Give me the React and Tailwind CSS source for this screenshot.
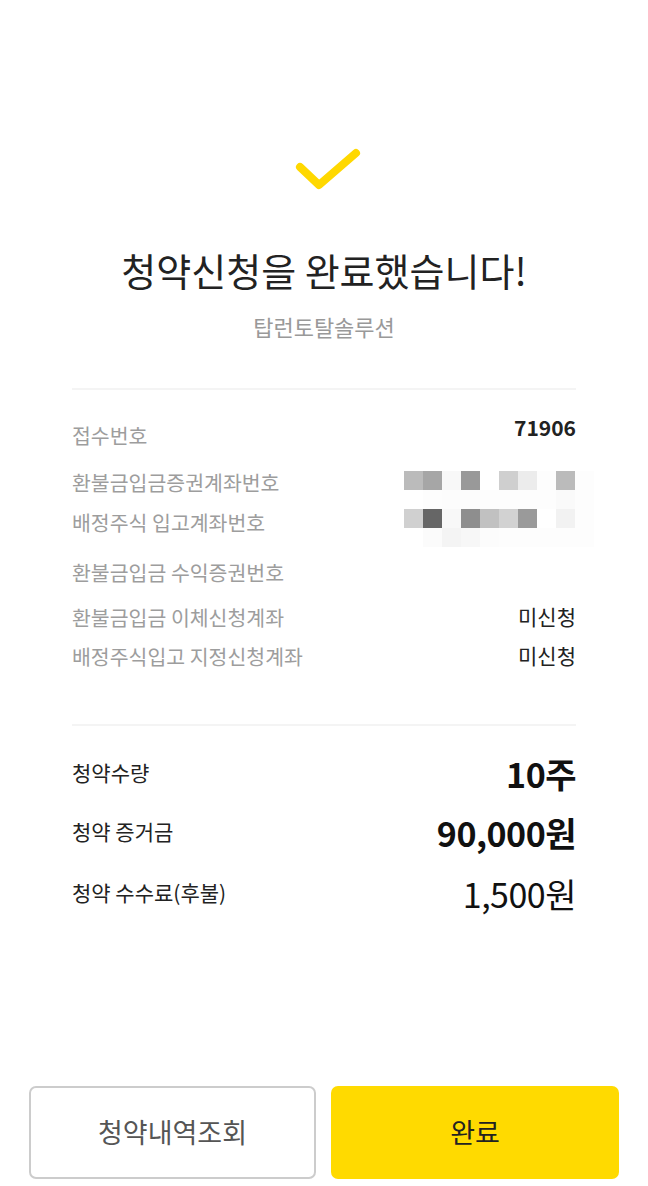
const FONT = "font-['Noto_Sans_CJK_KR','Noto_Sans',sans-serif]";

// 흐림 처리된 계좌번호 (4행 x 10열)
const BLUR = [
  ['bg-[#bbbbbb]', 'bg-[#a6a6a6]', 'bg-[#f8f8f8]', 'bg-[#999999]', 'bg-[#ffffff]', 'bg-[#cfcfcf]', 'bg-[#ececec]', 'bg-[#fdfdfd]', 'bg-[#bbbbbb]', 'bg-[#fdfdfd]'],
  ['bg-[#ffffff]', 'bg-[#fdfdfd]', 'bg-[#fcfcfc]', 'bg-[#fcfcfc]', 'bg-[#fdfdfd]', 'bg-[#fdfdfd]', 'bg-[#fdfdfd]', 'bg-[#fdfdfd]', 'bg-[#fafafa]', 'bg-[#fdfdfd]'],
  ['bg-[#d0d0d0]', 'bg-[#666666]', 'bg-[#f8f8f8]', 'bg-[#8e8e8e]', 'bg-[#c1c1c1]', 'bg-[#d2d2d2]', 'bg-[#9a9a9a]', 'bg-[#ffffff]', 'bg-[#f2f2f2]', 'bg-[#fdfdfd]'],
  ['bg-[#ffffff]', 'bg-[#fbfbfb]', 'bg-[#f4f4f4]', 'bg-[#f7f7f7]', 'bg-[#fcfcfc]', 'bg-[#fdfdfd]', 'bg-[#fdfdfd]', 'bg-[#fdfdfd]', 'bg-[#fdfdfd]', 'bg-[#fdfdfd]'],
];

function InfoRow({ label, value, className = '' }) {
  return (
    <div className={`flex items-center justify-between h-[28px] ${className}`}>
      <span className="text-[20.5px] text-[#9d9d9d]">{label}</span>
      {value && <span className="text-[21px] text-[#222]">{value}</span>}
    </div>
  );
}

function SummaryRow({ label, value, bold, className = '' }) {
  return (
    <div className={`flex items-center justify-between h-[40px] ${className}`}>
      <span className="text-[21px] text-[#222]">{label}</span>
      <span className={`text-[34px] text-[#111] tracking-[-0.5px] ${bold ? 'font-bold' : 'font-normal'}`}>
        {value}
      </span>
    </div>
  );
}

export default function App() {
  return (
    <div className={`min-h-screen h-[1186px] bg-white flex flex-col ${FONT}`}>
      {/* 완료 아이콘 */}
      <div className="flex justify-center pt-[146px]">
        <svg width="68" height="48" viewBox="0 0 68 48" className="ml-[8px]">
          <path
            d="M6 21 L25 39 L62 7"
            fill="none"
            stroke="#ffd800"
            strokeWidth="8"
            strokeLinecap="round"
            strokeLinejoin="round"
          />
        </svg>
      </div>

      <h1 className="mt-[51px] text-center text-[38px] leading-[50px] text-[#222] font-normal">
        청약신청을 완료했습니다!
      </h1>
      <p className="mt-[16px] text-center text-[22px] leading-[30px] text-[#999]">탑런토탈솔루션</p>

      <div className="px-[72px]">
        <div className="mt-[47px] h-[2px] bg-[#f4f4f4]" />

        {/* 계좌 정보 */}
        <div className="flex items-start justify-between h-[28px] mt-[31px]">
          <span className="text-[20.5px] leading-[28px] text-[#9d9d9d]">접수번호</span>
          <span className="-mt-[8px] text-[21px] leading-[28px] font-bold text-[#222]">71906</span>
        </div>

        <div className="flex items-start justify-between mt-[19px]">
          <div className="flex flex-col gap-[12px]">
            <span className="text-[20.5px] leading-[28px] text-[#9d9d9d]">환불금입금증권계좌번호</span>
            <span className="text-[20.5px] leading-[28px] text-[#9d9d9d]">배정주식 입고계좌번호</span>
          </div>
          <div className="mt-[3px] -mr-[18px] grid grid-cols-[repeat(10,19px)] grid-rows-[repeat(4,19px)]">
            {BLUR.flat().map((c, i) => (
              <div key={i} className={c} />
            ))}
          </div>
        </div>

        <InfoRow label="환불금입금 수익증권번호" className="mt-[11px]" />
        <InfoRow label="환불금입금 이체신청계좌" value="미신청" className="mt-[17px]" />
        <InfoRow label="배정주식입고 지정신청계좌" value="미신청" className="mt-[11px]" />

        <div className="mt-[54px] h-[2px] bg-[#f4f4f4]" />

        {/* 청약 요약 */}
        <SummaryRow label="청약수량" value="10주" bold className="mt-[27px]" />
        <SummaryRow label="청약 증거금" value="90,000원" bold className="mt-[19px]" />
        <SummaryRow label="청약 수수료(후불)" value="1,500원" className="mt-[21px]" />
      </div>

      {/* 하단 버튼 */}
      <div className="mt-auto flex gap-[15px] px-[29px] pb-[7px]">
        <button className="w-[287px] h-[93px] rounded-[7px] border-2 border-[#cccccc] bg-white text-[27px] text-[#555]">
          청약내역조회
        </button>
        <button className="w-[288px] h-[93px] rounded-[7px] bg-[#ffda00] text-[27px] text-[#222]">
          완료
        </button>
      </div>
    </div>
  );
}
